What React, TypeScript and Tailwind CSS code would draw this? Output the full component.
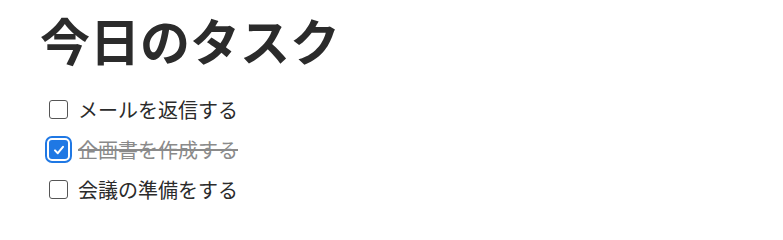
import React, { useState } from "react";

const font = { fontFamily: '"Noto Sans CJK JP", "Noto Sans", sans-serif' };

function Box({ checked }: { checked: boolean }) {
  if (checked) {
    return (
      <span className="flex h-[19px] w-[19px] shrink-0 items-center justify-center rounded-[3px] bg-[#1f78e4] outline-2 outline-offset-[2px] outline-[#1f78e4]">
        <svg width="14" height="14" viewBox="0 0 14 14" fill="none">
          <path d="M3 7.4 L5.8 10.2 L11 3.8" stroke="white" strokeWidth="2" strokeLinecap="round" strokeLinejoin="round" />
        </svg>
      </span>
    );
  }
  return <span className="h-[19px] w-[19px] shrink-0 rounded-[3px] border-[1.5px] border-[#555555] bg-white" />;
}

export default function App() {
  const [tasks] = useState([
    { t: "メールを返信する", done: false },
    { t: "企画書を作成する", done: true },
    { t: "会議の準備をする", done: false },
  ]);
  return (
    <div className="h-[213px] w-[783px] bg-white pl-[40px] pt-[11px]" style={font}>
      <h1 className="text-[50px] font-bold leading-[56px] text-[#2b2b2b]">今日のタスク</h1>
      <ul className="mt-[33px] flex flex-col gap-[21px] pl-[9px]">
        {tasks.map((x) => (
          <li key={x.t} className="flex h-[19px] items-center gap-[10px]">
            <Box checked={x.done} />
            <span
              className={
                "text-[20px] leading-[19px] " +
                (x.done ? "text-[#8a8a8a] line-through decoration-[#8a8a8a]" : "text-[#2b2b2b]")
              }
            >
              {x.t}
            </span>
          </li>
        ))}
      </ul>
    </div>
  );
}
